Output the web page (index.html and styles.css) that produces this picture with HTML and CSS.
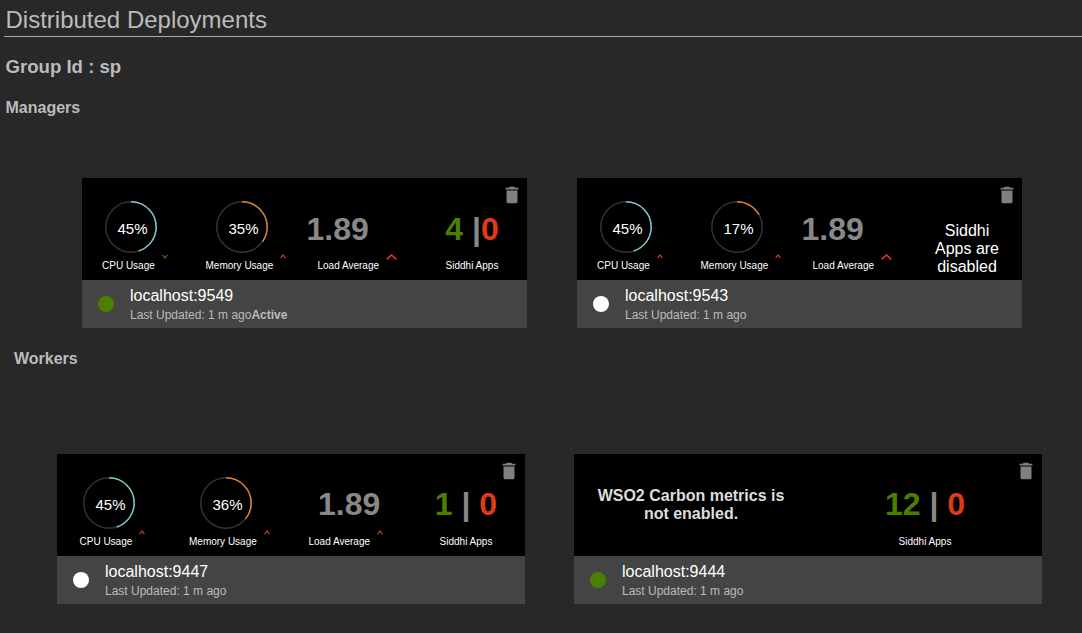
FILE: index.html
```html
<!DOCTYPE html>
<html lang="en">

<head>
    <meta charset="UTF-8">
    <meta name="viewport" content="width=device-width, initial-scale=1.0">
    <title>Distributed Deployments</title>
    <link rel="stylesheet" href="styles.css">
</head>

<body>
    <h1 class="page-title">Distributed Deployments</h1>
    <h2 class="group-title">Group Id : sp</h2>

    <h3 class="section-title">Managers</h3>
    <div class="card-row managers">
        <div class="card">
            <svg class="trash" viewBox="0 0 24 24"><path d="M6 19c0 1.1.9 2 2 2h8c1.1 0 2-.9 2-2V7H6v12zM19 4h-3.5l-1-1h-5l-1 1H5v2h14V4z"/></svg>
            <div class="stats">
                <div class="stat stat-cpu">
                    <svg class="gauge" viewBox="0 0 52 52">
                        <circle class="gauge-track" cx="26" cy="26" r="25.2"/>
                        <circle class="gauge-arc cpu" cx="26" cy="26" r="25.2" pathLength="100" stroke-dasharray="45 100"/>
                        <text class="gauge-text" x="27.5" y="33">45%</text>
                    </svg>
                    <div class="stat-label">CPU Usage <svg class="caret good" viewBox="0 0 6 5"><polyline points="0.6,0.8 3,4 5.4,0.8"/></svg></div>
                </div>
                <div class="stat stat-mem">
                    <svg class="gauge" viewBox="0 0 52 52">
                        <circle class="gauge-track" cx="26" cy="26" r="25.2"/>
                        <circle class="gauge-arc mem" cx="26" cy="26" r="25.2" pathLength="100" stroke-dasharray="35 100"/>
                        <text class="gauge-text" x="27.5" y="33">35%</text>
                    </svg>
                    <div class="stat-label">Memory Usage <svg class="caret" viewBox="0 0 6 5"><polyline points="0.6,4.2 3,1 5.4,4.2"/></svg></div>
                </div>
                <div class="stat stat-load">
                    <div class="big-value load-value">1.89</div>
                    <div class="stat-label">Load Average <svg class="caret caret-big" viewBox="0 0 11 6"><polyline points="0.7,5.4 5.5,1 10.3,5.4"/></svg></div>
                </div>
                <div class="stat stat-apps">
                    <div class="big-value"><span class="green">4</span> <span class="sep">|</span><span class="red">0</span></div>
                    <div class="stat-label">Siddhi Apps</div>
                </div>
            </div>
            <div class="card-footer">
                <span class="dot dot-green"></span>
                <div>
                    <div class="host">localhost:9549</div>
                    <div class="updated">Last Updated: 1 m ago<b>Active</b></div>
                </div>
            </div>
        </div>

        <div class="card">
            <svg class="trash" viewBox="0 0 24 24"><path d="M6 19c0 1.1.9 2 2 2h8c1.1 0 2-.9 2-2V7H6v12zM19 4h-3.5l-1-1h-5l-1 1H5v2h14V4z"/></svg>
            <div class="stats">
                <div class="stat stat-cpu">
                    <svg class="gauge" viewBox="0 0 52 52">
                        <circle class="gauge-track" cx="26" cy="26" r="25.2"/>
                        <circle class="gauge-arc cpu" cx="26" cy="26" r="25.2" pathLength="100" stroke-dasharray="45 100"/>
                        <text class="gauge-text" x="27.5" y="33">45%</text>
                    </svg>
                    <div class="stat-label">CPU Usage <svg class="caret" viewBox="0 0 6 5"><polyline points="0.6,4.2 3,1 5.4,4.2"/></svg></div>
                </div>
                <div class="stat stat-mem">
                    <svg class="gauge" viewBox="0 0 52 52">
                        <circle class="gauge-track" cx="26" cy="26" r="25.2"/>
                        <circle class="gauge-arc mem" cx="26" cy="26" r="25.2" pathLength="100" stroke-dasharray="17 100"/>
                        <text class="gauge-text" x="27.5" y="33">17%</text>
                    </svg>
                    <div class="stat-label">Memory Usage <svg class="caret" viewBox="0 0 6 5"><polyline points="0.6,4.2 3,1 5.4,4.2"/></svg></div>
                </div>
                <div class="stat stat-load">
                    <div class="big-value load-value">1.89</div>
                    <div class="stat-label">Load Average <svg class="caret caret-big" viewBox="0 0 11 6"><polyline points="0.7,5.4 5.5,1 10.3,5.4"/></svg></div>
                </div>
                <div class="stat stat-apps">
                    <div class="apps-disabled">Siddhi Apps are disabled</div>
                </div>
            </div>
            <div class="card-footer">
                <span class="dot"></span>
                <div>
                    <div class="host">localhost:9543</div>
                    <div class="updated">Last Updated: 1 m ago</div>
                </div>
            </div>
        </div>
    </div>

    <h3 class="section-title workers-title">Workers</h3>
    <div class="card-row workers">
        <div class="card">
            <svg class="trash" viewBox="0 0 24 24"><path d="M6 19c0 1.1.9 2 2 2h8c1.1 0 2-.9 2-2V7H6v12zM19 4h-3.5l-1-1h-5l-1 1H5v2h14V4z"/></svg>
            <div class="stats">
                <div class="stat stat-cpu">
                    <svg class="gauge" viewBox="0 0 52 52">
                        <circle class="gauge-track" cx="26" cy="26" r="25.2"/>
                        <circle class="gauge-arc cpu" cx="26" cy="26" r="25.2" pathLength="100" stroke-dasharray="45 100"/>
                        <text class="gauge-text" x="27.5" y="33">45%</text>
                    </svg>
                    <div class="stat-label">CPU Usage <svg class="caret" viewBox="0 0 6 5"><polyline points="0.6,4.2 3,1 5.4,4.2"/></svg></div>
                </div>
                <div class="stat stat-mem">
                    <svg class="gauge" viewBox="0 0 52 52">
                        <circle class="gauge-track" cx="26" cy="26" r="25.2"/>
                        <circle class="gauge-arc mem" cx="26" cy="26" r="25.2" pathLength="100" stroke-dasharray="36 100"/>
                        <text class="gauge-text" x="27.5" y="33">36%</text>
                    </svg>
                    <div class="stat-label">Memory Usage <svg class="caret" viewBox="0 0 6 5"><polyline points="0.6,4.2 3,1 5.4,4.2"/></svg></div>
                </div>
                <div class="stat stat-load">
                    <div class="big-value load-value">1.89</div>
                    <div class="stat-label">Load Average <svg class="caret" viewBox="0 0 6 5"><polyline points="0.6,4.2 3,1 5.4,4.2"/></svg></div>
                </div>
                <div class="stat stat-apps">
                    <div class="big-value"><span class="green">1</span> <span class="sep">|</span> <span class="red">0</span></div>
                    <div class="stat-label">Siddhi Apps</div>
                </div>
            </div>
            <div class="card-footer">
                <span class="dot"></span>
                <div>
                    <div class="host">localhost:9447</div>
                    <div class="updated">Last Updated: 1 m ago</div>
                </div>
            </div>
        </div>

        <div class="card">
            <svg class="trash" viewBox="0 0 24 24"><path d="M6 19c0 1.1.9 2 2 2h8c1.1 0 2-.9 2-2V7H6v12zM19 4h-3.5l-1-1h-5l-1 1H5v2h14V4z"/></svg>
            <div class="stats stats-nometrics">
                <div class="no-metrics">WSO2 Carbon metrics is not enabled.</div>
                <div class="stat stat-apps">
                    <div class="big-value"><span class="green">12</span> <span class="sep">|</span> <span class="red">0</span></div>
                    <div class="stat-label">Siddhi Apps</div>
                </div>
            </div>
            <div class="card-footer">
                <span class="dot dot-green"></span>
                <div>
                    <div class="host">localhost:9444</div>
                    <div class="updated">Last Updated: 1 m ago</div>
                </div>
            </div>
        </div>
    </div>
</body>
</html>
```

FILE: styles.css
```css
html, body {
    margin: 0;
    background: #282828;
    font-family: "Liberation Sans", Arial, sans-serif;
    color: #bbb;
}
body {
    height: 633px;
    overflow: hidden;
}
.page-title {
    margin: 0 0 0 4px;
    padding: 6px 0 2px 1.5px;
    height: 28px;
    line-height: 28px;
    font-size: 24px;
    font-weight: normal;
    border-bottom: 1px solid #aaa;
}
.group-title {
    margin: 19px 0 0 5.5px;
    height: 22px;
    line-height: 22px;
    font-size: 18.6px;
}
.section-title {
    margin: 20px 0 0 5.5px;
    height: 20px;
    line-height: 20px;
    font-size: 16px;
}
.workers-title {
    margin: 21px 0 0 14px;
}

.card-row {
    display: flex;
}
.managers {
    padding: 60px 0 0 82px;
    gap: 50px;
}
.workers {
    padding: 85px 0 0 57px;
    gap: 49px;
}
.card {
    position: relative;
    width: 445px;
    height: 150px;
    background: #000;
}
.workers .card {
    width: 468px;
}
.trash {
    position: absolute;
    top: 6px;
    right: 4px;
    width: 22px;
    height: 22px;
    fill: #808080;
}
.workers .trash {
    right: 5px;
}

.stats {
    display: grid;
    grid-template-columns: 103.5px 112px 114.5px 80px;
    padding: 23px 0 0 20px;
    height: 79px;
}
.workers .stats {
    grid-template-columns: 109.5px 119.5px 117.5px 80px;
    padding-left: 22.5px;
}
.workers .stats-nometrics {
    grid-template-columns: 200px 80px;
    column-gap: 94px;
    padding-left: 17px;
}
.stat {
    display: flex;
    flex-direction: column;
}
.gauge {
    display: block;
    width: 52px;
    height: 52px;
    fill: none;
}
.stat-cpu .gauge {
    margin-left: 3px;
}
.stat-mem .gauge {
    margin-left: 10.5px;
}
.gauge-track {
    stroke: #333;
    stroke-width: 1.5;
}
.gauge-arc {
    stroke-width: 1.5;
    transform: rotate(-90deg);
    transform-origin: 26px 26px;
}
.gauge-arc.cpu {
    stroke: #7cc5d2;
}
.gauge-arc.mem {
    stroke: #d9822b;
}
.gauge-text {
    fill: #fff;
    font-size: 15px;
    text-anchor: middle;
}
.stat-label {
    display: flex;
    align-items: flex-start;
    gap: 7px;
    margin-top: 7px;
    height: 12px;
    line-height: 12px;
    font-size: 10px;
    color: #fff;
    white-space: nowrap;
}
.stat-apps .stat-label {
    justify-content: center;
}
.caret {
    flex: none;
    width: 6px;
    height: 5px;
    margin-top: -6px;
    fill: none;
    stroke: #e0391b;
    stroke-width: 1.1;
}
.caret.good {
    stroke: #4b7f00;
}
.caret-big {
    width: 11px;
    height: 6px;
    stroke-width: 1.6;
}
.big-value {
    height: 52px;
    line-height: 56px;
    font-size: 32px;
    font-weight: bold;
    color: #888;
    text-align: center;
    white-space: nowrap;
}
.workers .big-value {
    line-height: 54px;
}
.load-value {
    margin-left: -11px;
    text-align: left;
}
.workers .load-value {
    margin-left: 9.5px;
}
.green {
    color: #4b7f00;
}
.red {
    color: #e0391b;
}
.sep {
    color: #888;
}
.apps-disabled {
    margin-top: 21px;
    line-height: 18px;
    font-size: 16px;
    color: #fff;
    text-align: center;
}
.no-metrics {
    margin-top: 10px;
    line-height: 18px;
    font-size: 16px;
    font-weight: bold;
    color: #ddd;
    text-align: center;
}

.card-footer {
    display: flex;
    align-items: center;
    gap: 16px;
    box-sizing: border-box;
    height: 48px;
    padding-left: 16px;
    background: #444;
}
.dot {
    flex: none;
    width: 16px;
    height: 16px;
    border-radius: 50%;
    background: #fff;
}
.dot-green {
    background: #4b7f00;
}
.host {
    line-height: 18px;
    font-size: 16px;
    color: #fff;
}
.updated {
    margin-top: 3px;
    line-height: 14px;
    font-size: 12px;
    color: #bbb;
}
```
